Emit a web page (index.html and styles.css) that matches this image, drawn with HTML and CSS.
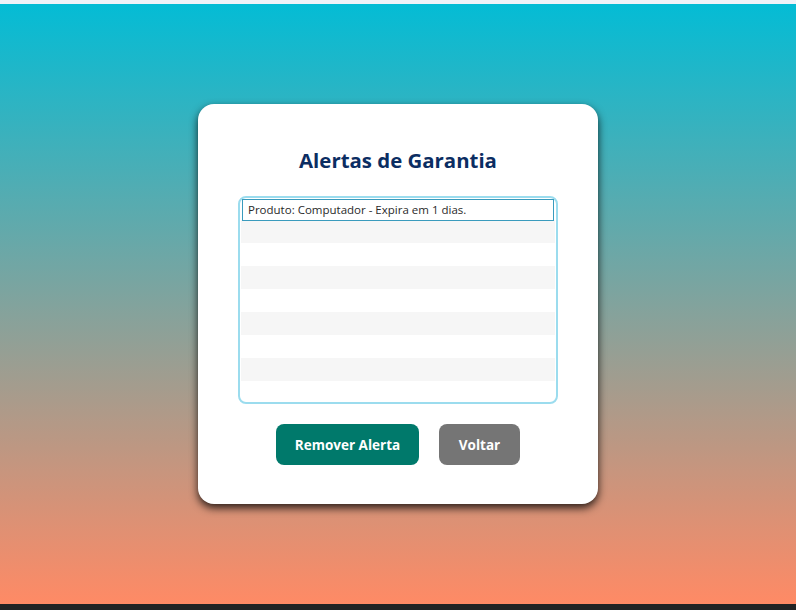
FILE: index.html
```html
<!DOCTYPE html>
<html lang="pt">
<head>
<meta charset="utf-8">
<title>Alertas de Garantia</title>
<link rel="stylesheet" href="styles.css">
</head>
<body>
<div class="topbar"></div>
<main class="stage">
  <section class="card">
    <h1 class="title">Alertas de Garantia</h1>
    <div class="listbox">
      <div class="item selected">Produto: Computador - Expira em 1 dias.</div>
    </div>
    <div class="actions">
      <button class="btn btn-remove">Remover Alerta</button>
      <button class="btn btn-back">Voltar</button>
    </div>
  </section>
</main>
<div class="bottombar"></div>
</body>
</html>
```
FILE: styles.css
```css
html, body {
  margin: 0;
  padding: 0;
  height: 100%;
}
body {
  display: flex;
  flex-direction: column;
  font-family: "Open Sans", "Noto Sans", sans-serif;
}
.topbar {
  height: 4px;
  background: #f0f2f8;
  flex: none;
}
.bottombar {
  height: 6px;
  background: #222324;
  flex: none;
}
.stage {
  flex: 1;
  display: flex;
  align-items: center;
  justify-content: center;
  background: linear-gradient(180deg, #04bcd5 0%, #ff8a65 100%);
}
.card {
  width: 400px;
  height: 400px;
  box-sizing: border-box;
  background: #fff;
  border-radius: 16px;
  box-shadow: 0 4px 8px rgba(0,0,0,0.8);
  display: flex;
  flex-direction: column;
  align-items: center;
  padding-top: 42px;
}
.title {
  margin: 0;
  font-size: 20.4px;
  font-weight: 700;
  color: #0b2d62;
  line-height: 28px;
}
.listbox {
  margin-top: 22px;
  width: 320px;
  height: 208px;
  box-sizing: border-box;
  border: 2px solid #9bdcee;
  border-radius: 8px;
  padding: 1px;
  background: repeating-linear-gradient(180deg, #ffffff 0px, #ffffff 23px, #f6f6f6 23px, #f6f6f6 46px);
  background-origin: content-box;
  background-clip: content-box;
  background-position: 0 -2px;
}
.item {
  height: 22px;
  box-sizing: border-box;
  font-size: 11.5px;
  line-height: 20px;
  color: #2a2a2a;
  padding-left: 5px;
  margin: 0 1px;
  background: #fff;
}
.item.selected {
  border: 1px solid #3a9bbd;
}
.actions {
  margin-top: 20px;
  display: flex;
  gap: 20px;
}
.btn {
  height: 41px;
  border: none;
  border-radius: 8px;
  color: #fff;
  font-family: inherit;
  font-weight: 700;
  font-size: 13.5px;
  padding: 0;
  white-space: nowrap;
  cursor: pointer;
}
.btn-remove {
  background: #00796b;
  width: 143px;
}
.btn-back {
  background: #757575;
  width: 81px;
}
```
